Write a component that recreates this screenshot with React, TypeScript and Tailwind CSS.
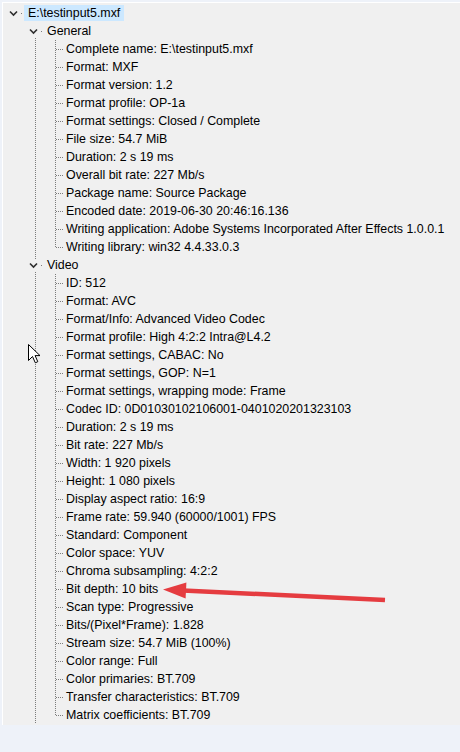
import React from "react";

const generalItems = [
  "Complete name: E:\\testinput5.mxf",
  "Format: MXF",
  "Format version: 1.2",
  "Format profile: OP-1a",
  "Format settings: Closed / Complete",
  "File size: 54.7 MiB",
  "Duration: 2 s 19 ms",
  "Overall bit rate: 227 Mb/s",
  "Package name: Source Package",
  "Encoded date: 2019-06-30 20:46:16.136",
  "Writing application: Adobe Systems Incorporated After Effects 1.0.0.1",
  "Writing library: win32 4.4.33.0.3",
];

const videoItems = [
  "ID: 512",
  "Format: AVC",
  "Format/Info: Advanced Video Codec",
  "Format profile: High 4:2:2 Intra@L4.2",
  "Format settings, CABAC: No",
  "Format settings, GOP: N=1",
  "Format settings, wrapping mode: Frame",
  "Codec ID: 0D01030102106001-0401020201323103",
  "Duration: 2 s 19 ms",
  "Bit rate: 227 Mb/s",
  "Width: 1 920 pixels",
  "Height: 1 080 pixels",
  "Display aspect ratio: 16:9",
  "Frame rate: 59.940 (60000/1001) FPS",
  "Standard: Component",
  "Color space: YUV",
  "Chroma subsampling: 4:2:2",
  "Bit depth: 10 bits",
  "Scan type: Progressive",
  "Bits/(Pixel*Frame): 1.828",
  "Stream size: 54.7 MiB (100%)",
  "Color range: Full",
  "Color primaries: BT.709",
  "Transfer characteristics: BT.709",
  "Matrix coefficients: BT.709",
];

const DOT = "#7c7c7c";

function vdots(x: number, y0: number, y1: number, key: string) {
  const out: React.ReactElement[] = [];
  for (let y = y0; y < y1; y += 2) {
    out.push(<rect key={key + y} x={x} y={y} width={1} height={1} fill={DOT} />);
  }
  return out;
}

function hdots(y: number, x0: number, x1: number, key: string) {
  const out: React.ReactElement[] = [];
  for (let x = x0; x < x1; x += 2) {
    out.push(<rect key={key + x} x={x} y={y} width={1} height={1} fill={DOT} />);
  }
  return out;
}

type CellProps = {
  up?: boolean;
  down?: boolean;
  full?: boolean;
  tail?: boolean;
  chevron?: boolean;
  dot?: boolean;
};

function Cell({ up, down, full, tail, chevron, dot }: CellProps) {
  const lx = 11;
  return (
    <svg width={20} height={18} className="shrink-0 block">
      {full && vdots(lx, 0, 18, "f")}
      {up && vdots(lx, 0, chevron ? 3 : 10, "u")}
      {down && vdots(lx, chevron ? 16 : 10, 18, "d")}
      {tail && hdots(9, 12, 20, "t")}
      {dot && <rect x={17} y={9} width={1} height={1} fill={DOT} />}
      {chevron && (
        <polyline
          points="6,7.5 9.5,11 13,7.5"
          fill="none"
          stroke="#2e2e2e"
          strokeWidth={1.6}
        />
      )}
    </svg>
  );
}

function Row({ children }: { children: React.ReactNode }) {
  return <div className="flex h-[18px] items-center">{children}</div>;
}

function Label({ text, pl = "pl-[2px]" }: { text: string; pl?: string }) {
  return (
    <span className={`${pl} whitespace-nowrap text-[12.4px] leading-[18px] text-black`}>
      {text}
    </span>
  );
}

export default function App() {
  return (
    <div className="relative h-[752px] w-[460px] overflow-hidden bg-[#eef2f9] font-['Liberation_Sans',Arial,sans-serif]">
      <div className="ml-[2px] mt-[2px] h-[723px] border-l border-t border-white bg-[#f0f0f0] pl-[1px] pt-[1px]">
        <Row>
          <Cell chevron dot />
          <span className="h-[16px] whitespace-nowrap bg-[#cce8ff] px-[4px] text-[12.4px] leading-[16px] text-black">
            E:\testinput5.mxf
          </span>
        </Row>
        <Row>
          <div className="w-[20px] shrink-0" />
          <Cell chevron down dot />
          <Label text="General" pl="pl-[3px]" />
        </Row>
        {generalItems.map((t, i) => (
          <Row key={"g" + i}>
            <div className="w-[20px] shrink-0" />
            <Cell full />
            {i === generalItems.length - 1 ? <Cell up tail /> : <Cell full tail />}
            <Label text={t} />
          </Row>
        ))}
        <Row>
          <div className="w-[20px] shrink-0" />
          <Cell chevron up down dot />
          <Label text="Video" pl="pl-[3px]" />
        </Row>
        {videoItems.map((t, i) => (
          <Row key={"v" + i}>
            <div className="w-[20px] shrink-0" />
            <Cell full />
            {i === videoItems.length - 1 ? <Cell up tail /> : <Cell full tail />}
            <Label text={t} />
          </Row>
        ))}
      </div>

      <svg
        className="pointer-events-none absolute left-0 top-0"
        width={460}
        height={752}
      >
        <line
          x1={183}
          y1={590.5}
          x2={385}
          y2={600}
          stroke="#e53c40"
          strokeWidth={4.5}
          strokeLinecap="butt"
        />
        <polygon points="163,589.5 186.4,582.6 185.6,598.4" fill="#e53c40" />
      </svg>

      <svg
        className="pointer-events-none absolute left-[28px] top-[344px]"
        width={14}
        height={21}
        viewBox="0 0 14 21"
      >
        <path
          d="M0.5 0.5 L0.5 16.5 L4.5 12.5 L7.3 18.8 L9.8 17.7 L7.1 11.6 L12 11.6 Z"
          fill="#ffffff"
          stroke="#000000"
          strokeWidth={1}
          strokeLinejoin="miter"
        />
      </svg>
    </div>
  );
}
